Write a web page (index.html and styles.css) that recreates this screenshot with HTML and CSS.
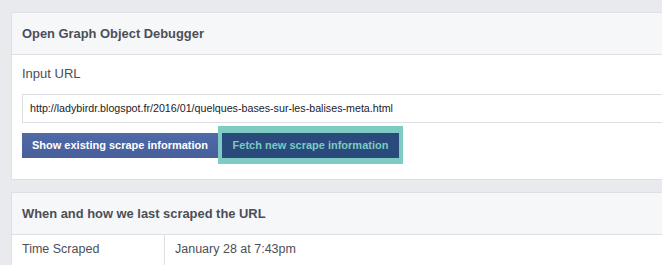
FILE: index.html
```html
<!DOCTYPE html>
<html>
<head>
<meta charset="utf-8">
<link rel="stylesheet" href="styles.css">
</head>
<body>
<div class="page">
  <section class="card">
    <div class="card-header">Open Graph Object Debugger</div>
    <div class="card-body">
      <div class="label">Input URL</div>
      <div class="input">http://ladybirdr.blogspot.fr/2016/01/quelques-bases-sur-les-balises-meta.html</div>
      <div class="buttons">
        <span class="btn btn-primary">Show existing scrape information</span>
        <span class="btn btn-dark highlighted">Fetch new scrape information</span>
      </div>
    </div>
  </section>
  <section class="card">
    <div class="card-header">When and how we last scraped the URL</div>
    <div class="row">
      <div class="cell key">Time Scraped</div>
      <div class="cell value">January 28 at 7:43pm</div>
    </div>
  </section>
</div>
</body>
</html>
```
FILE: styles.css
```css
html, body {
  margin: 0;
  padding: 0;
  background: #e9eaed;
  overflow: hidden;
}
body {
  font-family: "Liberation Sans", Arial, sans-serif;
  color: #4b4f56;
}
.page {
  padding: 12px 0 0 11px;
  width: 720px;
}
.card {
  background: #fff;
  border: 1px solid #dddfe2;
  margin-bottom: 12px;
}
.card-header {
  background: #f6f7f9;
  border-bottom: 1px solid #dddfe2;
  height: 41px;
  line-height: 42px;
  padding-left: 10px;
  font-size: 12.9px;
  font-weight: bold;
  color: #4b4f56;
}
.card-body {
  padding: 10px 10px 21px 10px;
}
.label {
  font-size: 13px;
  line-height: 18px;
  color: #4b4f56;
}
.input {
  margin-top: 11px;
  border: 1px solid #dddfe2;
  height: 27px;
  line-height: 27px;
  padding-left: 7px;
  font-size: 10.7px;
  color: #1d2129;
}
.buttons {
  margin-top: 10px;
  display: flex;
  position: relative;
  z-index: 0;
}
.btn {
  display: block;
  height: 25px;
  line-height: 25px;
  font-size: 11px;
  font-weight: bold;
  padding: 0;
  box-sizing: border-box;
  text-align: center;
  white-space: nowrap;
}
.btn-primary {
  width: 196px;
  background: linear-gradient(#4f6aa8, #475f9b);
  color: #fff;
}
.btn-dark {
  margin-left: 4px;
  width: 177px;
  background: #2a4a7c;
  color: #7ccbc2;
}
.highlighted {
  position: relative;
}
.highlighted::before {
  content: "";
  position: absolute;
  top: -7px;
  bottom: -6px;
  left: -4px;
  right: -4px;
  background: #7ecbc3;
  z-index: -1;
}
.row {
  display: flex;
  height: 40px;
}
.cell {
  padding: 7px 10px;
  font-size: 12.5px;
  color: #4b4f56;
}
.key {
  width: 132px;
  border-right: 1px solid #dddfe2;
}
```
